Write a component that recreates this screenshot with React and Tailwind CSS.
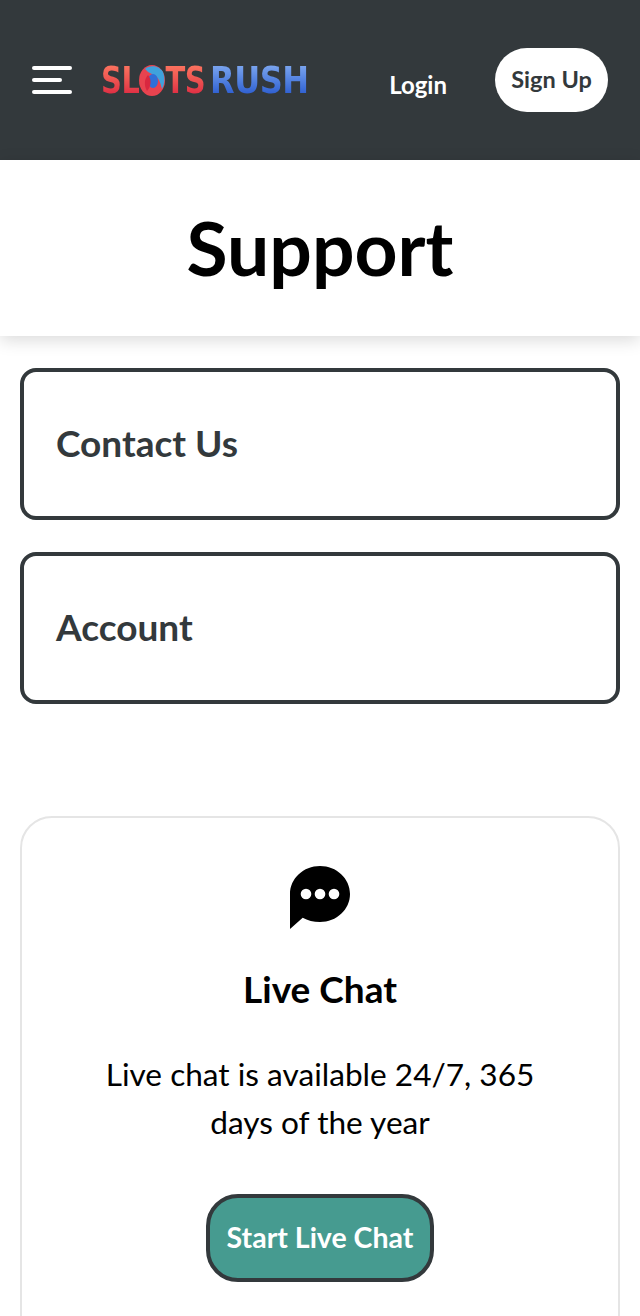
function Menu() {
  return (
    <div className="flex flex-col gap-2 w-10">
      <span className="h-1 w-10 bg-white rounded-full" />
      <span className="h-1 w-[30px] bg-white rounded-full" />
      <span className="h-1 w-10 bg-white rounded-full" />
    </div>
  )
}

function LogoBall() {
  return (
    <svg viewBox="0 0 26 31" className="w-[26px] h-[31px] shrink-0">
      <ellipse cx="13" cy="15.5" rx="13" ry="15.5" fill="#e8434f" />
      <path d="M6 4C10 0 20 0 24 7C26 12 26 19 23 24C21 16 19 11 13 9C10 8 8 6 6 4Z" fill="#3fa2dc" />
      <ellipse cx="14" cy="16" rx="5" ry="7" fill="#2f6fd8" />
      <path d="M9 10C13 14 12 22 8 26C5 21 5 14 9 10Z" fill="#d9273f" />
    </svg>
  )
}

function Logo() {
  const red = "inline-block scale-y-[1.3] bg-gradient-to-b from-[#ff7a62] to-[#d9173f] bg-clip-text text-transparent"
  const blue = "inline-block scale-y-[1.18] bg-gradient-to-b from-[#86aef2] to-[#2353cc] bg-clip-text text-transparent"
  return (
    <div className="font-['DejaVu_Sans',sans-serif] font-bold text-[29px] leading-none flex items-center w-[208px] ml-[29px]">
      <span className={`${red} tracking-[-0.5px]`}>SL</span>
      <LogoBall />
      <span className={`${red} tracking-[-0.5px]`}>TS</span>
      <span className={`${blue} ml-[5px] text-[32px] tracking-[-0.5px]`}>RUSH</span>
    </div>
  )
}

function Row({ label }) {
  return (
    <div className="h-[152px] border-4 border-[#33393c] rounded-2xl flex items-center px-8 pb-[2px] text-[37px] font-bold text-[#33393c]">
      {label}
    </div>
  )
}

export default function App() {
  return (
    <div className="w-[640px] h-[1316px] overflow-hidden bg-white font-['Lato',sans-serif]">
      <header className="h-40 bg-[#33393c] flex items-center pl-8 pr-8">
        <Menu />
        <Logo />
        <span className="ml-auto mt-[10px] text-white text-2xl font-bold">Login</span>
        <span className="ml-12 w-[113px] h-16 rounded-full bg-white text-[#33393c] text-[23.5px] font-bold flex items-center justify-center">Sign Up</span>
      </header>
      <div className="h-44 pb-[2px] flex items-center justify-center shadow-[0_4px_16px_rgba(0,0,0,0.15)]">
        <h1 className="text-[75px] font-bold text-black">Support</h1>
      </div>
      <div className="px-5 pt-8 flex flex-col gap-8">
        <Row label="Contact Us" />
        <Row label="Account" />
      </div>
      <div className="mx-5 mt-28 border-2 border-[#e5e5e5] rounded-[32px] flex flex-col items-center pt-12 h-[560px]">
        <svg viewBox="0 0 60 64" className="w-[60px] h-16" fill="currentColor">
          <path d="M30 0C13.4 0 0 12.5 0 28V63L12.7 51.7C17.5 54.5 23.5 56 30 56C46.6 56 60 43.5 60 28S46.6 0 30 0Z" />
          <circle cx="16" cy="28" r="5.3" fill="#fff" />
          <circle cx="30" cy="28" r="5.3" fill="#fff" />
          <circle cx="44" cy="28" r="5.3" fill="#fff" />
        </svg>
        <h2 className="mt-[31px] text-[37px] font-bold text-black">Live Chat</h2>
        <p className="mt-[33px] w-[460px] text-center text-[31.6px] leading-[48px] text-black">Live chat is available 24/7, 365 days of the year</p>
        <button className="mt-12 w-[228px] h-[88px] rounded-[32px] bg-[#469b90] border-4 border-[#33393c] text-white text-[28.5px] font-bold">Start Live Chat</button>
      </div>
    </div>
  )
}
